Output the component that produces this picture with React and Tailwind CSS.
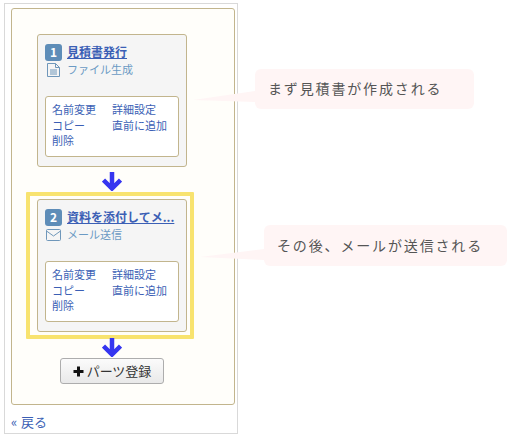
import React from 'react';

const FONT = '"Noto Sans CJK JP", "Liberation Sans", sans-serif';

const FileIcon = () => (
  <svg width="13" height="14" viewBox="0 0 13 14" fill="none" stroke="#6f97ba" strokeWidth="1">
    <path d="M.5 .5h8l4 4v9H.5z" />
    <path d="M8.5 .5v4h4" />
    <path d="M3 7h7M3 9h7M3 11h7" />
  </svg>
);

const MailIcon = () => (
  <svg width="15" height="12" viewBox="0 0 15 12" fill="none" stroke="#6f97ba" strokeWidth="1">
    <rect x=".5" y=".5" width="14" height="11" rx="1" />
    <path d="M.5 2l7 5 7-5" />
  </svg>
);

const Arrow = () => (
  <svg width="20" height="19" viewBox="0 0 20 19" className="block">
    <path d="M10 0v16M1.5 8l8.5 8.5L18.5 8" fill="none" stroke="#3535f0" strokeWidth="4.5" />
  </svg>
);

const Card = ({ num, title, icon, sub }) => (
  <div className="w-[150px] h-[133px] shrink-0 bg-[#f5f5f5] border border-[#c2b58d] rounded-[3px] px-[7px] pt-[8px]">
    <div className="flex items-center h-[18px] gap-[5px]">
      <span className="w-[17px] h-[17px] shrink-0 rounded-[3px] bg-[#5e8db8] text-white text-[12px] font-bold flex items-center justify-center">{num}</span>
      <a className="text-[12px] font-bold text-[#3b5fb5] underline whitespace-nowrap leading-[18px]">{title}</a>
    </div>
    <div className="flex items-center h-[18px] gap-[6px] pl-[1px] text-[11px] text-[#6b9ac4]">
      <span className="w-[15px] flex justify-center">{icon}</span>
      <span className="pb-[2px]">{sub}</span>
    </div>
    <div className="mt-[17px] w-[134px] h-[61px] bg-white border border-[#c2b58d] rounded-[3px] pl-[6px] pt-[5px] text-[11px] leading-[15.5px] text-[#3b5fb5] grid grid-cols-[60px_1fr] content-start">
      <span>名前変更</span>
      <span>詳細設定</span>
      <span>コピー</span>
      <span>直前に追加</span>
      <span>削除</span>
    </div>
  </div>
);

const Bubble = ({ className, tail, children }) => (
  <div className={`absolute bg-[#fff5f5] rounded-[6px] flex items-center text-[14px] tracking-[1.85px] text-[#555] whitespace-nowrap ${className}`}>
    {tail}
    {children}
  </div>
);

export default function App() {
  return (
    <div className="relative w-[507px] h-[439px] bg-white overflow-hidden" style={{ fontFamily: FONT }}>
      <div className="ml-[4px] mt-[3px] w-[234px] h-[431px] border border-[#d9d9d9] px-[6px] pt-[4px] absolute">
        <div className="w-[224px] h-[397px] bg-[#fffefa] border border-[#c2b58d] rounded-[3px] flex flex-col items-center pt-[25px] pr-[22px]">
          <Card num="1" title="見積書発行" icon={<FileIcon />} sub="ファイル生成" />
          <div className="mt-[5px] h-[20px]"><Arrow /></div>
          <div className="border-[4px] border-[#f8e36f] w-[168px] h-[147px] shrink-0 mr-[4px] pl-[7px] pt-[3px] rounded-[1px]">
            <Card num="2" title="資料を添付してメ..." icon={<MailIcon />} sub="メール送信" />
          </div>
          <div className="mt-[-1px] h-[20px]"><Arrow /></div>
          <button className="w-[104px] h-[26px] shrink-0 bg-gradient-to-b from-[#fbfbfb] to-[#e9e9e9] border border-[#adadad] rounded-[3px] text-[13px] text-[#333] flex items-center justify-center gap-[3px]">
            <svg width="11" height="11" viewBox="0 0 11 11"><path d="M5.5 .5v10M.5 5.5h10" stroke="#111" strokeWidth="3" /></svg>
            パーツ登録
          </button>
        </div>
        <a className="flex mt-[8px] text-[13px] leading-[18px] text-[#3b5fb5]"><span className="w-[10px]">«</span>戻る</a>
      </div>
      <Bubble
        className="left-[255px] top-[69px] w-[219px] h-[40px] pl-[13px] pb-[1px]"
        tail={
          <svg width="62" height="12" viewBox="0 0 62 12" className="absolute right-full top-[22px]">
            <polygon points="62,0 62,11 0,9" fill="#fff5f5" />
          </svg>
        }
      >
        まず見積書が作成される
      </Bubble>
      <Bubble
        className="left-[264px] top-[225px] w-[243px] h-[41px] pl-[13px]"
        tail={
          <svg width="64" height="12" viewBox="0 0 64 12" className="absolute right-full top-[24px]">
            <polygon points="64,0 64,11 0,8" fill="#fff5f5" />
          </svg>
        }
      >
        その後、メールが送信される
      </Bubble>
    </div>
  );
}
